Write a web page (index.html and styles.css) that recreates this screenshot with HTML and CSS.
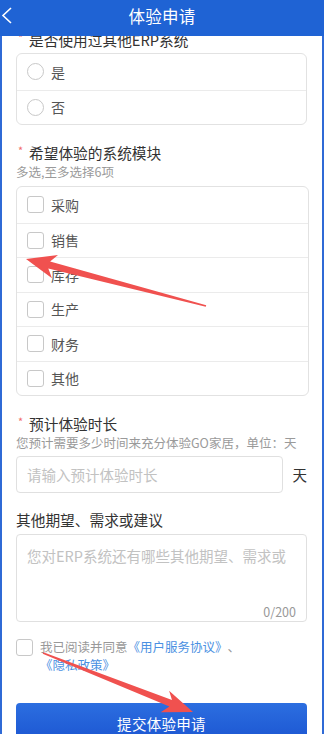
FILE: index.html
```html
<!DOCTYPE html>
<html lang="zh-CN">
<head>
    <meta charset="UTF-8">
    <meta name="viewport" content="width=device-width, initial-scale=1.0">
    <title>体验申请</title>
    <link rel="stylesheet" href="styles.css">
</head>
<body>
    <header class="topbar">
        <svg class="back" width="14" height="30" viewBox="0 0 14 30">
            <path d="M11 8 L3 15.5 L11 23" fill="none" stroke="#fff" stroke-width="1.6"/>
        </svg>
        <h1>体验申请</h1>
    </header>

    <main class="form">
        <section class="field first">
            <div class="label"><span class="req">*</span>是否使用过其他ERP系统</div>
            <div class="group">
                <div class="option"><span class="radio"></span>是</div>
                <div class="option"><span class="radio"></span>否</div>
            </div>
        </section>

        <section class="field">
            <div class="label"><span class="req">*</span>希望体验的系统模块</div>
            <div class="hint">多选,至多选择6项</div>
            <div class="group checks">
                <div class="option"><span class="check"></span>采购</div>
                <div class="option"><span class="check"></span>销售</div>
                <div class="option"><span class="check"></span>库存</div>
                <div class="option"><span class="check"></span>生产</div>
                <div class="option"><span class="check"></span>财务</div>
                <div class="option"><span class="check"></span>其他</div>
            </div>
        </section>

        <section class="field">
            <div class="label"><span class="req">*</span>预计体验时长</div>
            <div class="hint">您预计需要多少时间来充分体验GO家居，单位：天</div>
            <div class="input-row">
                <div class="input">请输入预计体验时长</div>
                <span class="unit">天</span>
            </div>
        </section>

        <section class="field other">
            <div class="label">其他期望、需求或建议</div>
            <div class="textarea">
                <div class="placeholder">您对ERP系统还有哪些其他期望、需求或</div>
                <div class="counter">0/200</div>
            </div>
        </section>

        <div class="agree">
            <span class="check"></span>
            <p>我已阅读并同意<a>《用户服务协议》</a>、<br><a>《隐私政策》</a></p>
        </div>

        <button class="submit">提交体验申请</button>
    </main>

    <svg class="marks" width="324" height="734" viewBox="0 0 324 734">
        <polygon fill="#f0514f" points="26,259 58,255 50.1,261.6 206.2,305.2 205.8,306.8 48.3,268.4 52,278.2"/>
        <polygon fill="#f0514f" points="193,712 169.1,690.8 172,699.9 43.3,652.3 42.7,653.7 169.4,706.5 160.7,712.2"/>
    </svg>
</body>
</html>
```

FILE: styles.css
```css
* {
    margin: 0;
    padding: 0;
    box-sizing: border-box;
    font-family: "Noto Sans CJK SC", "Noto Sans", sans-serif;
}

body {
    background: #fff;
    border-left: 2px solid #2f6ad6;
    border-right: 2px solid #2f6ad6;
    height: 734px;
    overflow: hidden;
    position: relative;
}

.topbar {
    position: fixed;
    top: 0;
    left: 0;
    right: 0;
    height: 36px;
    background: #1f63d4;
    display: flex;
    align-items: center;
    justify-content: center;
    z-index: 2;
}

.topbar .back {
    position: absolute;
    left: 0;
    top: 0;
}

.topbar h1 {
    color: #fff;
    font-size: 16.5px;
    font-weight: 400;
    line-height: 24px;
    margin-bottom: 4px;
    letter-spacing: 0.2px;
}

.form {
    padding: 30px 15px 0 14px;
}

.field {
    margin-top: 17.5px;
}

.field.first {
    margin-top: 0;
}

.field.other {
    margin-top: 17px;
}

.label {
    font-size: 14.7px;
    line-height: 20px;
    color: #333;
    display: flex;
}

.req {
    width: 13px;
    padding-left: 2px;
    color: #f26b6b;
    font-size: 11px;
    line-height: 14px;
}

.hint {
    font-size: 12.5px;
    line-height: 18px;
    color: #9a9a9a;
    text-spacing-trim: space-all;
}

.group {
    margin-top: 3px;
    border: 1px solid #e2e2e2;
    border-radius: 6px;
}

.checks {
    margin-top: 5.5px;
    margin-right: -2px;
}

.option {
    height: 34.5px;
    display: flex;
    align-items: center;
    padding-left: 10px;
    font-size: 14px;
    color: #555;
    border-top: 1px solid #ebebeb;
}

.option:first-child {
    border-top: none;
    height: 35.5px;
}

.radio {
    width: 17px;
    height: 17px;
    border: 1px solid #c8c8c8;
    border-radius: 50%;
    margin-right: 7px;
}

.check {
    width: 17px;
    height: 17px;
    border: 1px solid #c8c8c8;
    border-radius: 3px;
    margin-right: 7px;
    flex-shrink: 0;
}

.input-row {
    margin-top: 4.5px;
    display: flex;
    align-items: center;
}

.input {
    flex: 1;
    height: 37px;
    border: 1px solid #e0e0e0;
    border-radius: 4px;
    padding-left: 10px;
    display: flex;
    align-items: center;
    font-size: 14.5px;
    color: #c2c2c2;
}

.unit {
    width: 24px;
    text-align: right;
    font-size: 14.5px;
    color: #333;
}

.textarea {
    margin-top: 4px;
    height: 88px;
    border: 1px solid #e0e0e0;
    border-radius: 4px;
    padding: 11px 10px 2px 10px;
    display: flex;
    flex-direction: column;
    justify-content: space-between;
}

.placeholder {
    font-size: 14.5px;
    line-height: 20px;
    white-space: nowrap;
    color: #c2c2c2;
    text-spacing-trim: space-all;
}

.counter {
    text-align: right;
    font-size: 12.5px;
    line-height: 14px;
    color: #999;
}

.agree {
    margin-top: 15.5px;
    display: flex;
    align-items: flex-start;
}

.agree .check {
    margin-top: 1px;
    margin-right: 7px;
}

.agree p {
    font-size: 12.5px;
    line-height: 18.6px;
    color: #999;
    text-spacing-trim: space-all;
}

.agree a {
    color: #4a90e2;
}

.submit {
    margin-top: 28.5px;
    width: 100%;
    height: 40px;
    border: none;
    border-radius: 4px;
    background: linear-gradient(#2c6ee0, #1b55d1);
    color: #fff;
    font-size: 14.5px;
    letter-spacing: 0.3px;
}

.marks {
    position: absolute;
    top: 0;
    left: -2px;
    pointer-events: none;
    z-index: 3;
}
```
